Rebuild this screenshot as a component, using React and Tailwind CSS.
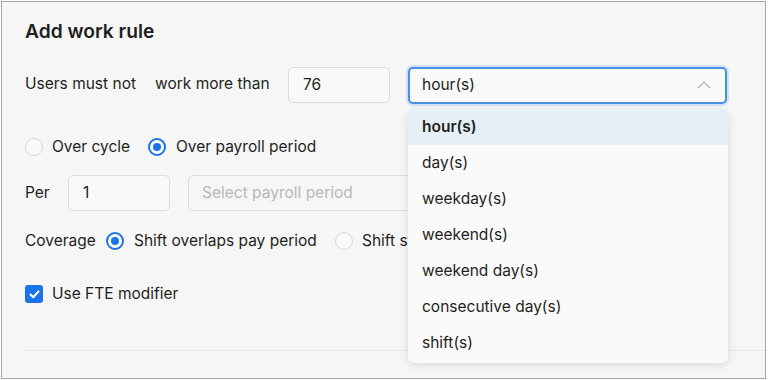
import React from "react";

function Radio({ checked }) {
  return checked ? (
    <span className="w-[18px] h-[18px] rounded-full border-2 border-[#1a73e8] bg-white flex items-center justify-center shrink-0">
      <span className="w-[8px] h-[8px] rounded-full bg-[#1a73e8]" />
    </span>
  ) : (
    <span className="w-[18px] h-[18px] rounded-full border border-[#d6d6d6] bg-[#fafafa] shrink-0" />
  );
}

const items = [
  "hour(s)",
  "day(s)",
  "weekday(s)",
  "weekend(s)",
  "weekend day(s)",
  "consecutive day(s)",
  "shift(s)",
];

export default function App() {
  return (
    <div
      className="w-[768px] h-[380px] bg-white p-[1px] text-[15.5px] text-[#1f1f21]"
      style={{ fontFamily: "Inter, 'Noto Sans', sans-serif" }}
    >
      <div className="h-[378px] w-[765px] border border-[#a5a5a5] bg-[#f6f6f6] overflow-hidden">
        <div className="pl-[23px] pt-[15px] flex flex-col">
          <h1 className="text-[19.2px] leading-[28px] font-semibold">Add work rule</h1>

          <div className="mt-[22px] flex items-center h-[36px]">
            <span className="w-[130px] shrink-0 -mt-[3px]">Users must not</span>
            <span className="w-[133px] shrink-0 -mt-[3px]">work more than</span>
            <div className="w-[102px] h-[36px] rounded-[5px] border border-[#dcdcdc] bg-[#f9f9f9] flex items-center pl-[14px] mr-[18px]">
              76
            </div>
            <div className="relative">
              <div className="w-[319px] h-[37px] rounded-[5px] border-2 border-[#4a90e2] shadow-[0_0_0_2px_#cfe1f7] bg-[#f9f9f9] flex items-center pl-[12px] pr-[14px] justify-between">
                <span>hour(s)</span>
                <svg width="14" height="8" viewBox="0 0 14 8" fill="none">
                  <path d="M1 7L7 1L13 7" stroke="#b5b5b5" strokeWidth="1.2" />
                </svg>
              </div>
              <div className="absolute left-0 top-[42px] w-[320px] rounded-[6px] bg-[#fafafa] shadow-[0_2px_8px_rgba(0,0,0,0.12)] pb-[2px] z-10 overflow-hidden">
                {items.map((t, i) => (
                  <div
                    key={t}
                    className={
                      "h-[36px] flex items-center pl-[14px] " +
                      (i === 0 ? "bg-[#e5eff7] font-semibold" : "")
                    }
                  >
                    {t}
                  </div>
                ))}
              </div>
            </div>
          </div>

          <div className="mt-[34px] flex items-center h-[20px]">
            <Radio />
            <span className="ml-[9px] w-[96px] shrink-0">Over cycle</span>
            <Radio checked />
            <span className="ml-[10px]">Over payroll period</span>
          </div>

          <div className="mt-[18px] flex items-center h-[36px]">
            <span className="w-[43px]">Per</span>
            <div className="w-[102px] h-[36px] rounded-[5px] border border-[#dcdcdc] bg-[#f9f9f9] flex items-center pl-[14px] mr-[18px]">
              1
            </div>
            <div className="w-[330px] h-[36px] rounded-[5px] border border-[#dcdcdc] bg-[#f6f6f6] flex items-center pl-[13px] text-[#b8b8b8]">
              Select payroll period
            </div>
          </div>

          <div className="mt-[20px] flex items-center h-[20px]">
            <span className="w-[81px] shrink-0">Coverage</span>
            <Radio checked />
            <span className="ml-[10px] w-[201px] shrink-0">Shift overlaps pay period</span>
            <Radio />
            <span className="ml-[9px]">Shift starts in pay period</span>
          </div>

          <div className="mt-[33px] flex items-center h-[20px]">
            <span className="w-[18px] h-[18px] rounded-[3px] bg-[#1a73e8] flex items-center justify-center">
              <svg width="11" height="9" viewBox="0 0 11 9" fill="none">
                <path d="M1.5 4.5L4.2 7.2L9.5 1.5" stroke="white" strokeWidth="2" strokeLinecap="round" strokeLinejoin="round" />
              </svg>
            </span>
            <span className="ml-[9px]">Use FTE modifier</span>
          </div>

          <div className="mt-[46px] h-px bg-[#e6e6e6]" />
        </div>
      </div>
    </div>
  );
}
